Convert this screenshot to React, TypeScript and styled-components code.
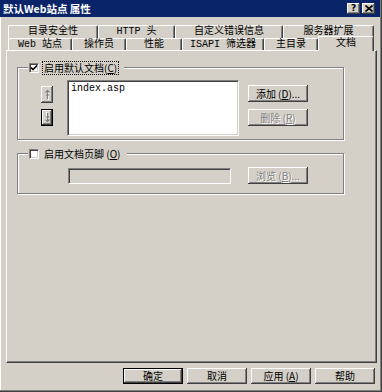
import React from "react";
import styled, { createGlobalStyle, css } from "styled-components";

const FACE = "#D4D0C8";
const SHADOW = "#808080";
const DARK = "#404040";
const CJK = `"Noto Sans CJK SC", "Noto Sans", sans-serif`;
const MONO = `"Liberation Mono", "Noto Sans CJK SC", monospace`;

const GlobalStyle = createGlobalStyle`
  html, body { margin: 0; padding: 0; background: #fff; }
  body { font-family: ${CJK}; font-size: 10px; color: #000; }
  * { box-sizing: border-box; }
`;

const Window = styled.div`
  width: 382px;
  height: 392px;
  background: ${FACE};
  display: flex;
  flex-direction: column;
  border-right: 1px solid ${DARK};
  border-bottom: 1px solid ${DARK};
  box-shadow: inset -1px -1px 0 ${SHADOW}, inset 1px 0 0 #fff;
`;

const TitleBar = styled.div`
  height: 17px;
  width: 380px;
  background: #0a246a;
  display: flex;
  align-items: center;
  padding: 0 5px 0 3px;
  color: #fff;
  font-weight: bold;
  font-size: 10.5px;
  font-family: ${CJK};
`;

const TitleText = styled.span`
  flex: 1;
  line-height: 17px;
  white-space: nowrap;
`;

const CaptionButtons = styled.div`
  display: flex;
  gap: 2px;
`;

const CaptionButton = styled.div`
  width: 13px;
  height: 11px;
  background: ${FACE};
  display: flex;
  align-items: center;
  justify-content: center;
  color: #000;
  font-family: "DejaVu Sans", sans-serif;
  font-size: 9px;
  font-weight: bold;
  line-height: 1;
  box-shadow: inset -1px -1px 0 ${DARK}, inset 1px 1px 0 #fff,
    inset -2px -2px 0 ${SHADOW};
`;

const Body = styled.div`
  flex: 1;
  display: flex;
  flex-direction: column;
  padding: 8px 0 0 6px;
`;

const TabStrip = styled.div`
  margin-left: 2px;
  width: 366px;
  display: flex;
  flex-direction: column;
`;

const TabRow = styled.div<{ $h: number }>`
  display: flex;
  height: ${(p) => p.$h}px;
`;

const Tab = styled.div<{ $w: number; $active?: boolean }>`
  width: ${(p) => p.$w}px;
  height: 100%;
  background: ${FACE};
  border-top: 1px solid #fff;
  border-left: 1px solid #fff;
  border-right: 1px solid ${DARK};
  border-top-left-radius: 2px;
  border-top-right-radius: 2px;
  box-shadow: inset -1px 0 0 ${SHADOW};
  display: flex;
  justify-content: center;
  font-family: ${MONO};
  font-size: 10px;
  line-height: 12px;
  white-space: nowrap;
  ${(p) =>
    p.$active &&
    css`
      position: relative;
      z-index: 2;
      margin-top: -2px;
      height: calc(100% + 3px);
      padding-top: 1px;
    `}
`;

const Panel = styled.div`
  width: 371px;
  height: 313px;
  background: ${FACE};
  border-top: 1px solid #fff;
  border-left: 1px solid #fff;
  border-right: 1px solid ${DARK};
  border-bottom: 1px solid ${DARK};
  box-shadow: inset -1px -1px 0 ${SHADOW};
  display: flex;
  flex-direction: column;
  gap: 13px;
  padding: 16px 0 0 10px;
`;

const GroupBox = styled.div<{ $h: number }>`
  position: relative;
  width: 327px;
  height: ${(p) => p.$h}px;
  border: 1px solid ${SHADOW};
  box-shadow: 1px 1px 0 #fff, inset 1px 1px 0 #fff;
`;

const Legend = styled.div`
  position: absolute;
  top: -7px;
  left: 10px;
  height: 13px;
  padding: 0 5px 0 1px;
  background: ${FACE};
  display: flex;
  align-items: center;
  gap: 3px;
`;

const CheckBox = styled.div`
  width: 10px;
  height: 10px;
  background: #fff;
  border-top: 1px solid ${SHADOW};
  border-left: 1px solid ${SHADOW};
  border-right: 1px solid #fff;
  border-bottom: 1px solid #fff;
  box-shadow: inset 1px 1px 0 ${DARK}, inset -1px -1px 0 ${FACE};
  display: flex;
  align-items: center;
  justify-content: center;
`;

const CheckLabel = styled.span<{ $focus?: boolean }>`
  padding: 0 1px;
  line-height: 12px;
  white-space: pre;
  border: 1px dotted ${(p) => (p.$focus ? "#000" : "transparent")};
`;

const GroupRow = styled.div<{ $pt: number; $pl: number }>`
  display: flex;
  align-items: flex-start;
  padding: ${(p) => p.$pt}px 0 0 ${(p) => p.$pl}px;
`;

const ArrowColumn = styled.div`
  display: flex;
  flex-direction: column;
  gap: 6px;
  margin-top: 6px;
`;

const ListBox = styled.div`
  width: 172px;
  height: 56px;
  margin-left: 14px;
  background: #fff;
  border-top: 1px solid ${SHADOW};
  border-left: 1px solid ${SHADOW};
  border-right: 1px solid #fff;
  border-bottom: 1px solid #fff;
  box-shadow: inset 1px 1px 0 ${DARK}, inset -1px -1px 0 ${FACE};
  padding: 2px 3px;
  font-family: ${MONO};
  font-size: 10px;
  line-height: 12px;
`;

const TextBox = styled.div`
  width: 163px;
  height: 16px;
  background: ${FACE};
  border-top: 1px solid ${SHADOW};
  border-left: 1px solid ${SHADOW};
  border-right: 1px solid #fff;
  border-bottom: 1px solid #fff;
  box-shadow: inset 1px 1px 0 ${DARK}, inset -1px -1px 0 ${FACE};
`;

const SideColumn = styled.div<{ $ml: number; $mt: number }>`
  display: flex;
  flex-direction: column;
  gap: 7px;
  margin-left: ${(p) => p.$ml}px;
  margin-top: ${(p) => p.$mt}px;
`;

const PushButton = styled.div<{
  $w: number;
  $h: number;
  $default?: boolean;
  $disabled?: boolean;
}>`
  width: ${(p) => p.$w}px;
  height: ${(p) => p.$h}px;
  background: ${FACE};
  display: flex;
  align-items: center;
  justify-content: center;
  white-space: pre;
  font-size: 10px;
  line-height: 1;
  color: ${(p) => (p.$disabled ? SHADOW : "#000")};
  text-shadow: ${(p) => (p.$disabled ? "1px 1px 0 #fff" : "none")};
  border: ${(p) => (p.$default ? "1px solid #000" : "none")};
  box-shadow: inset -1px -1px 0 ${DARK}, inset 1px 1px 0 #fff,
    inset -2px -2px 0 ${SHADOW};
`;

const ButtonRow = styled.div`
  width: 371px;
  display: flex;
  justify-content: flex-end;
  gap: 4px;
  margin-top: 5px;
  padding-right: 2px;
`;

const Arrow = ({ up }: { up?: boolean }) => (
  <svg width="9" height="11" viewBox="0 0 9 11">
    <g transform={up ? undefined : "rotate(180 4.5 5.5)"}>
      <g stroke="#fff" strokeWidth="1" fill="none" transform="translate(1 1)">
        <line x1="4.5" y1="1" x2="4.5" y2="10" />
        <polyline points="2.5,3.5 4.5,1.5 6.5,3.5" />
      </g>
      <g stroke={SHADOW} strokeWidth="1.2" fill="none">
        <line x1="4.5" y1="1" x2="4.5" y2="10" />
        <polyline points="2.5,3.5 4.5,1.5 6.5,3.5" />
        <line x1="3" y1="6" x2="6" y2="6" />
      </g>
    </g>
  </svg>
);

const CloseGlyph = () => (
  <svg width="8" height="7" viewBox="0 0 8 7">
    <path d="M0.5 0.5 L7.5 6.5 M7.5 0.5 L0.5 6.5" stroke="#000" strokeWidth="1.6" />
  </svg>
);

const CheckGlyph = () => (
  <svg width="8" height="8" viewBox="0 0 8 8">
    <polyline points="1,3.5 3,5.5 7,1.5" stroke="#000" strokeWidth="1.6" fill="none" />
  </svg>
);

const row1 = [
  { label: "目录安全性", w: 90 },
  { label: "HTTP 头", w: 77 },
  { label: "自定义错误信息", w: 108 },
  { label: "服务器扩展", w: 91 },
];

const row2 = [
  { label: "Web 站点", w: 64 },
  { label: "操作员", w: 54 },
  { label: "性能", w: 56 },
  { label: "ISAPI 筛选器", w: 82 },
  { label: "主目录", w: 54 },
  { label: "文档", w: 56, active: true },
];

export default function App() {
  return (
    <>
      <GlobalStyle />
      <Window>
        <TitleBar>
          <TitleText>默认Web站点 属性</TitleText>
          <CaptionButtons>
            <CaptionButton>?</CaptionButton>
            <CaptionButton>
              <CloseGlyph />
            </CaptionButton>
          </CaptionButtons>
        </TitleBar>
        <Body>
          <TabStrip>
            <TabRow $h={13}>
              {row1.map((t) => (
                <Tab key={t.label} $w={t.w}>
                  {t.label}
                </Tab>
              ))}
            </TabRow>
            <TabRow $h={12}>
              {row2.map((t) => (
                <Tab key={t.label} $w={t.w} $active={t.active}>
                  {t.label}
                </Tab>
              ))}
            </TabRow>
          </TabStrip>
          <Panel>
            <GroupBox $h={73}>
              <Legend>
                <CheckBox>
                  <CheckGlyph />
                </CheckBox>
                <CheckLabel $focus>
                  启用默认文档(<u>C</u>)
                </CheckLabel>
              </Legend>
              <GroupRow $pt={12} $pl={23}>
                <ArrowColumn>
                  <PushButton $w={12} $h={17}>
                    <Arrow up />
                  </PushButton>
                  <PushButton $w={12} $h={17} $default>
                    <Arrow />
                  </PushButton>
                </ArrowColumn>
                <ListBox>index.asp</ListBox>
                <SideColumn $ml={9} $mt={5}>
                  <PushButton $w={60} $h={17}>
                    添加 (<u>D</u>)...
                  </PushButton>
                  <PushButton $w={60} $h={17} $disabled>
                    删除 (<u>R</u>)
                  </PushButton>
                </SideColumn>
              </GroupRow>
            </GroupBox>
            <GroupBox $h={41}>
              <Legend>
                <CheckBox />
                <CheckLabel>
                  启用文档页脚 (<u>O</u>)
                </CheckLabel>
              </Legend>
              <GroupRow $pt={14} $pl={50}>
                <TextBox />
                <SideColumn $ml={17} $mt={-1}>
                  <PushButton $w={60} $h={17} $disabled>
                    浏览 (<u>B</u>)...
                  </PushButton>
                </SideColumn>
              </GroupRow>
            </GroupBox>
          </Panel>
          <ButtonRow>
            <PushButton $w={60} $h={16} $default>
              确定
            </PushButton>
            <PushButton $w={60} $h={16}>
              取消
            </PushButton>
            <PushButton $w={60} $h={16}>
              应用 (<u>A</u>)
            </PushButton>
            <PushButton $w={60} $h={16}>
              帮助
            </PushButton>
          </ButtonRow>
        </Body>
      </Window>
    </>
  );
}
